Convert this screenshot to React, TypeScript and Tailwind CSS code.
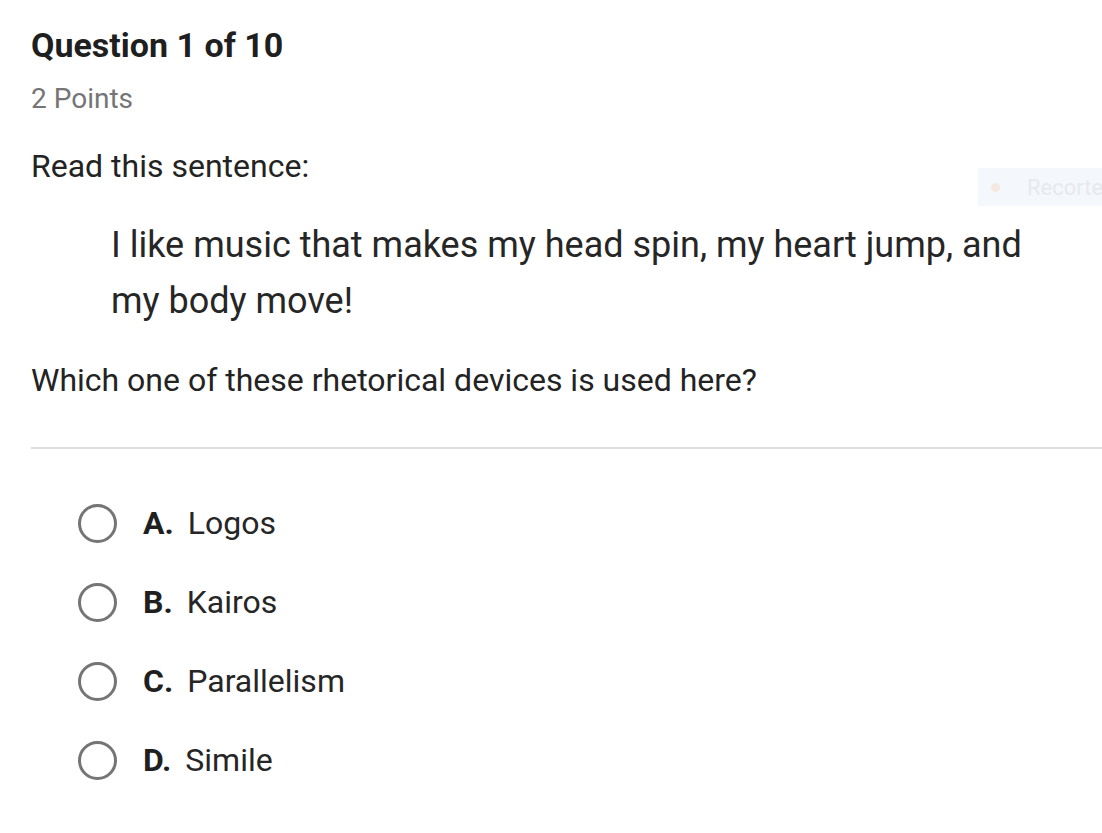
import React from "react";

const options = [
  { k: "A.", t: "Logos" },
  { k: "B.", t: "Kairos" },
  { k: "C.", t: "Parallelism" },
  { k: "D.", t: "Simile" },
];

export default function App() {
  return (
    <div
      className="relative w-[1102px] h-[833px] overflow-hidden bg-white text-[#212121]"
      style={{ fontFamily: "Roboto, 'Noto Sans', sans-serif" }}
    >
      <div className="pl-[31px] pt-[25px]">
        <h1 className="text-[34px] font-bold leading-[40px] text-[#1f1f1f]">Question 1 of 10</h1>
        <div className="mt-[18px] text-[28px] leading-[32px] text-[#757575]">2 Points</div>
        <p className="mt-[31px] text-[32px] leading-[40px] text-[#232323]">Read this sentence:</p>
        <div className="mt-[31px] ml-[80px] w-[930px] text-[36px] leading-[56px] text-[#262626]">
          I like music that makes my head spin, my heart jump, and my body move!
        </div>
        <p className="mt-[31px] text-[32px] leading-[40px] text-[#232323]">Which one of these rhetorical devices is used here?</p>
        <div className="mt-[47px] h-[2px] bg-[#dedede]" />
        <div className="mt-[54px] flex flex-col gap-[39px] pl-[47px]">
          {options.map((o) => (
            <div key={o.k} className="flex items-center h-[40px]">
              <div className="w-[39px] h-[39px] rounded-full border-[3px] border-[#757575]" />
              <span className="ml-[26px] text-[32px] font-bold text-[#1f1f1f]">{o.k}</span>
              <span className="ml-[14px] text-[32px] text-[#262626]">{o.t}</span>
            </div>
          ))}
        </div>
      </div>
      <div className="absolute left-[978px] top-[168px] w-[140px] h-[38px] bg-[#f4f8fc] flex items-center pl-[13px]">
        <div className="w-[9px] h-[9px] rounded-full bg-[#f6e8e0]" />
        <span className="ml-[27px] text-[22px] text-[#e6e9ed]">Recorte</span>
      </div>
    </div>
  );
}
